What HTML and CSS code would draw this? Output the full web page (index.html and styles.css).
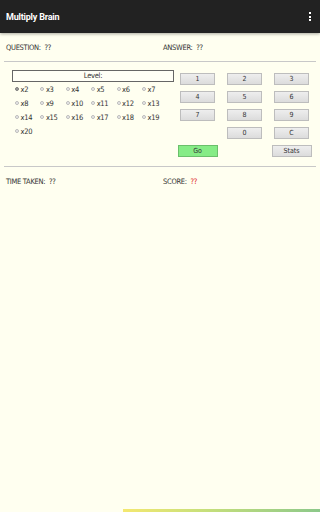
FILE: index.html
```html
<!DOCTYPE html>
<html>
<head>
<meta charset="utf-8">
<link rel="stylesheet" href="styles.css">
</head>
<body>
<div class="appbar">
  <div class="title">Multiply Brain</div>
  <div class="menu"><span></span><span></span><span></span></div>
</div>
<div class="content">
  <div class="inforow">
    <div class="cell">QUESTION:&nbsp; ??</div>
    <div class="cell">ANSWER:&nbsp; ??</div>
  </div>
  <div class="sep"></div>
  <div class="main">
    <div class="levels">
      <div class="levelbox">Level:</div>
      <div class="radios">
        <div class="radio"><span class="dot on"></span>x2</div>
        <div class="radio"><span class="dot"></span>x3</div>
        <div class="radio"><span class="dot"></span>x4</div>
        <div class="radio"><span class="dot"></span>x5</div>
        <div class="radio"><span class="dot"></span>x6</div>
        <div class="radio"><span class="dot"></span>x7</div>
        <div class="radio"><span class="dot"></span>x8</div>
        <div class="radio"><span class="dot"></span>x9</div>
        <div class="radio"><span class="dot"></span>x10</div>
        <div class="radio"><span class="dot"></span>x11</div>
        <div class="radio"><span class="dot"></span>x12</div>
        <div class="radio"><span class="dot"></span>x13</div>
        <div class="radio"><span class="dot"></span>x14</div>
        <div class="radio"><span class="dot"></span>x15</div>
        <div class="radio"><span class="dot"></span>x16</div>
        <div class="radio"><span class="dot"></span>x17</div>
        <div class="radio"><span class="dot"></span>x18</div>
        <div class="radio"><span class="dot"></span>x19</div>
        <div class="radio"><span class="dot"></span>x20</div>
      </div>
    </div>
    <div class="keypad">
      <div class="btn">1</div>
      <div class="btn">2</div>
      <div class="btn">3</div>
      <div class="btn">4</div>
      <div class="btn">5</div>
      <div class="btn">6</div>
      <div class="btn">7</div>
      <div class="btn">8</div>
      <div class="btn">9</div>
      <div class="blank"></div>
      <div class="btn">0</div>
      <div class="btn">C</div>
      <div class="btn wide go">Go</div>
      <div class="blank"></div>
      <div class="btn wide">Stats</div>
    </div>
  </div>
  <div class="sep"></div>
  <div class="inforow">
    <div class="cell">TIME TAKEN:&nbsp; ??</div>
    <div class="cell">SCORE:&nbsp; <span class="red">??</span></div>
  </div>
</div>
<div class="bottombar"></div>
</body>
</html>
```
FILE: styles.css
```css
html, body {
  margin: 0;
  padding: 0;
  width: 320px;
  height: 512px;
  overflow: hidden;
  background: #fffff0;
  font-family: "DejaVu Sans Condensed", "DejaVu Sans", sans-serif;
  font-stretch: condensed;
  color: #333;
}
body {
  position: relative;
}
.appbar {
  height: 33px;
  background: #222;
  display: flex;
  align-items: center;
  justify-content: space-between;
  padding: 0 9px 0 6px;
  box-shadow: 0 1px 3px rgba(0,0,0,0.35);
  position: relative;
  font-family: Roboto, "Liberation Sans", sans-serif;
  font-stretch: normal;
}
.title {
  color: #fff;
  font-weight: bold;
  font-size: 9px;
  letter-spacing: -0.2px;
}
.menu {
  display: flex;
  flex-direction: column;
  gap: 1.5px;
}
.menu span {
  width: 2px;
  height: 2px;
  background: #fff;
}
.inforow {
  display: flex;
  height: 28px;
  align-items: center;
  padding-left: 6px;
  font-size: 7.5px;
  letter-spacing: -0.3px;
}
.inforow .cell:first-child {
  width: 157px;
}
.red {
  color: #e02020;
}
.sep {
  margin: 0 4px;
  height: 1px;
  background: #c8c8c8;
}
.main {
  display: flex;
  height: 104px;
}
.levels {
  margin-left: 12px;
  width: 162px;
  padding-top: 8px;
}
.levelbox {
  height: 10px;
  border: 1px solid #666;
  font-size: 7.5px;
  letter-spacing: -0.3px;
  line-height: 10px;
  text-align: center;
  background: #fffff6;
}
.radios {
  display: grid;
  grid-template-columns: repeat(6, 25.4px);
  grid-auto-rows: 14px;
}
.radio {
  display: flex;
  align-items: center;
  font-size: 7.5px;
  letter-spacing: -0.3px;
  padding-left: 3px;
  gap: 1.5px;
}
.dot {
  width: 4px;
  height: 4px;
  border-radius: 50%;
  border: 0.5px solid #bbb;
  background: #eee;
  box-sizing: border-box;
}
.dot.on {
  border: 0.5px solid #777;
  background: radial-gradient(circle, #555 45%, #eee 55%);
}
.keypad {
  margin-left: 6px;
  padding-top: 11px;
  display: grid;
  grid-template-columns: 35px 35px 35px;
  column-gap: 12px;
  grid-auto-rows: 12px;
  row-gap: 6px;
}
.btn {
  height: 12px;
  box-sizing: border-box;
  border: 1px solid #bdbdbd;
  background: linear-gradient(#eeeeee, #dcdcdc);
  font-size: 7px;
  line-height: 10px;
  text-align: center;
  color: #333;
}
.btn.wide {
  width: 40px;
  justify-self: center;
}
.btn.go {
  background: #86ec86;
  border-color: #6bbf6b;
}
.bottombar {
  position: absolute;
  left: 123px;
  right: 0;
  bottom: 0;
  height: 3px;
  background: linear-gradient(90deg, #f4e870, #c8e07a 40%, #8cc88a);
}
```
